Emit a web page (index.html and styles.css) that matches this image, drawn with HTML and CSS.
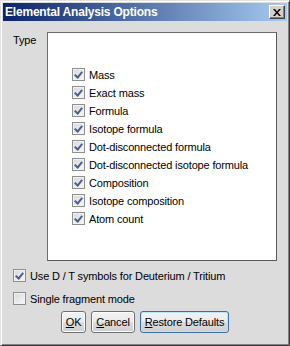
FILE: index.html
```html
<!DOCTYPE html>
<html lang="en">
<head>
    <meta charset="UTF-8">
    <title>Elemental Analysis Options</title>
    <link rel="stylesheet" href="styles.css">
</head>
<body>
    <div class="window">
        <div class="titlebar">
            <span class="title">Elemental Analysis Options</span>
            <span class="close">
                <svg width="8" height="7" viewBox="0 0 8 7"><path d="M0 0h2l2 2.5L6 0h2L5 3.5 8 7H6L4 4.5 2 7H0l3-3.5z" fill="#000"/></svg>
            </span>
        </div>
        <div class="content">
            <div class="type-row">
                <div class="type-label">Type</div>
                <div class="list">
                    <label class="item"><span class="cb checked"></span>Mass</label>
                    <label class="item"><span class="cb checked"></span>Exact mass</label>
                    <label class="item"><span class="cb checked"></span>Formula</label>
                    <label class="item"><span class="cb checked"></span>Isotope formula</label>
                    <label class="item"><span class="cb checked"></span>Dot-disconnected formula</label>
                    <label class="item"><span class="cb checked"></span>Dot-disconnected isotope formula</label>
                    <label class="item"><span class="cb checked"></span>Composition</label>
                    <label class="item"><span class="cb checked"></span>Isotope composition</label>
                    <label class="item"><span class="cb checked"></span>Atom count</label>
                </div>
            </div>
            <label class="option first"><span class="cb checked"></span>Use D / T symbols for Deuterium / Tritium</label>
            <label class="option"><span class="cb"></span>Single fragment mode</label>
            <div class="buttons">
                <button class="btn btn-ok"><u>O</u>K</button>
                <button class="btn"><u>C</u>ancel</button>
                <button class="btn btn-default"><u>R</u>estore Defaults</button>
            </div>
        </div>
    </div>
</body>
</html>
```

FILE: styles.css
```css
body {
    margin: 0;
    font-family: "Liberation Sans", Arial, sans-serif;
    font-size: 11px;
    letter-spacing: -0.15px;
    color: #000;
}
.window {
    width: 290px;
    height: 346px;
    box-sizing: border-box;
    border: 1px solid;
    border-color: #e2e2e2 #404040 #404040 #e2e2e2;
    box-shadow: inset 1px 1px #fff, inset -1px -1px #808080;
    padding: 2px;
    background: #dcdcdc;
    display: flex;
    flex-direction: column;
}
.titlebar {
    height: 18px;
    background: linear-gradient(to right, #0a246a, #a6caf0);
    display: flex;
    align-items: center;
    justify-content: space-between;
    padding: 0 2px 0 2px;
}
.title {
    color: #fff;
    font-weight: bold;
    font-size: 12px;
    letter-spacing: -0.2px;
}
.close {
    width: 14px;
    height: 12px;
    background: #d4d0c8;
    border: 1px solid;
    border-color: #fff #404040 #404040 #fff;
    box-shadow: inset -1px -1px #808080;
    display: flex;
    align-items: center;
    justify-content: center;
}
.content {
    flex: 1;
    padding: 11px 10px 0 10px;
    display: flex;
    flex-direction: column;
}
.type-row {
    display: flex;
    height: 229px;
}
.type-label {
    width: 34px;
    padding-top: 2px;
}
.list {
    flex: 1;
    background: #fff;
    border: 1px solid #6e6e6e;
    border-right-color: #5a5a5a;
    border-bottom-color: #5a5a5a;
    display: flex;
    flex-direction: column;
    justify-content: center;
    padding-left: 24px;
}
.item, .option {
    display: flex;
    align-items: center;
    height: 18px;
    white-space: nowrap;
}
.option {
    height: 23px;
}
.option.first {
    margin-top: 3px;
}
.cb {
    width: 11px;
    height: 11px;
    border: 1px solid #8e8f8f;
    background: linear-gradient(135deg, #d8d8d8, #f8f8f8);
    box-shadow: inset 0 0 0 1px #f2f2f2;
    margin-right: 4px;
    flex: none;
    position: relative;
}
.cb.checked::after {
    content: "";
    position: absolute;
    left: 3px;
    top: 1px;
    width: 3px;
    height: 6px;
    border: solid #4a5f92;
    border-width: 0 2px 2px 0;
    transform: rotate(40deg);
}
.buttons {
    display: flex;
    justify-content: center;
    gap: 5px;
    margin-top: 1px;
}
.btn {
    font-family: inherit;
    font-size: 11px;
    letter-spacing: -0.15px;
    color: #000;
    height: 22px;
    padding: 0 4px;
    border: 1px solid #707070;
    border-radius: 3px;
    background: linear-gradient(#f2f2f2, #ebebeb 50%, #dddddd 50%, #cfcfcf);
    box-shadow: inset 0 0 0 1px #fcfcfc;
}
.btn-ok {
    min-width: 25px;
}
.btn-default {
    border-color: #3c6fa1;
    box-shadow: inset 0 0 0 1px #bfe3f7;
}
```
